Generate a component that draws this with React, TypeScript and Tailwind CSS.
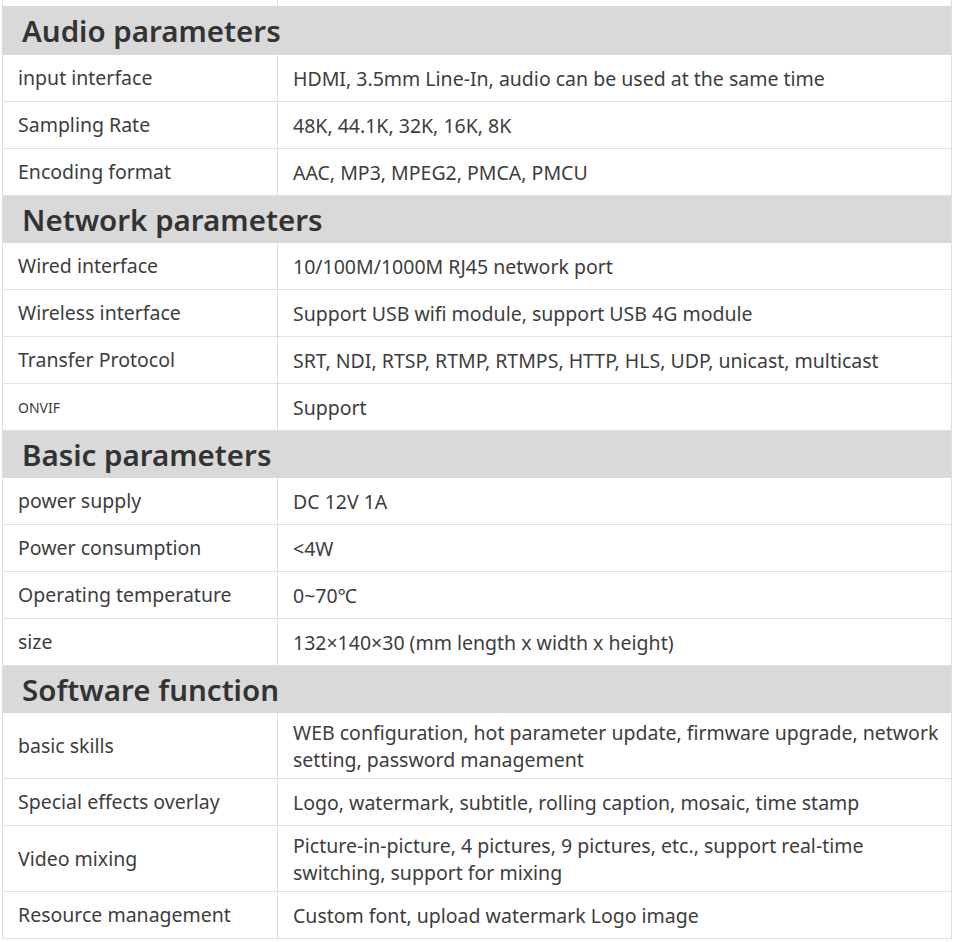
type Row = { label: string; value: string[]; small?: boolean; tall?: boolean };
type Section = { title: string; rows: Row[]; first?: boolean };

const sections: Section[] = [
  {
    title: "Audio parameters",
    first: true,
    rows: [
      { label: "input interface", value: ["HDMI, 3.5mm Line-In, audio can be used at the same time"] },
      { label: "Sampling Rate", value: ["48K, 44.1K, 32K, 16K, 8K"] },
      { label: "Encoding format", value: ["AAC, MP3, MPEG2, PMCA, PMCU"] },
    ],
  },
  {
    title: "Network parameters",
    rows: [
      { label: "Wired interface", value: ["10/100M/1000M RJ45 network port"] },
      { label: "Wireless interface", value: ["Support USB wifi module, support USB 4G module"] },
      { label: "Transfer Protocol", value: ["SRT, NDI, RTSP, RTMP, RTMPS, HTTP, HLS, UDP, unicast, multicast"] },
      { label: "ONVIF", value: ["Support"], small: true },
    ],
  },
  {
    title: "Basic parameters",
    rows: [
      { label: "power supply", value: ["DC 12V 1A"] },
      { label: "Power consumption", value: ["<4W"] },
      { label: "Operating temperature", value: ["0~70℃"] },
      { label: "size", value: ["132×140×30 (mm length x width x height)"] },
    ],
  },
  {
    title: "Software function",
    rows: [
      {
        label: "basic skills",
        value: ["WEB configuration, hot parameter update, firmware upgrade, network", "setting, password management"],
        tall: true,
      },
      { label: "Special effects overlay", value: ["Logo, watermark, subtitle, rolling caption, mosaic, time stamp"] },
      {
        label: "Video mixing",
        value: ["Picture-in-picture, 4 pictures, 9 pictures, etc., support real-time", "switching, support for mixing"],
        tall: true,
      },
      { label: "Resource management", value: ["Custom font, upload watermark Logo image"] },
    ],
  },
];

export default function App() {
  return (
    <div
      className="w-[955px] h-[942px] bg-white overflow-hidden text-[#3d3d3d]"
      style={{ fontFamily: '"Noto Sans", "Open Sans", sans-serif' }}
    >
      <div className="ml-[2px] w-[950px] border-x border-[#dedede]">
        {/* tail of the previous row */}
        <div className="flex h-[6px]">
          <div className="w-[275px] border-r border-[#dedede]" />
        </div>
        {sections.map((s) => (
          <div key={s.title}>
            <div
              className={`${s.first ? "h-[49px]" : "h-[47px]"} bg-[#d9d9d9] flex items-center pl-[19px] text-[29.5px] font-semibold text-[#333] leading-none`}
            >
              {s.title}
            </div>
            {s.rows.map((r) => (
              <div
                key={r.label}
                className={`flex border-b border-[#e2e2e2] ${r.tall ? "h-[66px]" : "h-[47px]"}`}
              >
                <div
                  className={`w-[275px] shrink-0 border-r border-[#dedede] flex items-center pl-[15px] ${
                    r.small ? "text-[14px]" : "text-[19.5px]"
                  }`}
                >
                  {r.label}
                </div>
                <div className="flex-1 flex flex-col justify-center pl-[15px] text-[19.5px] leading-[27px] whitespace-nowrap">
                  {r.value.map((line) => (
                    <span key={line}>{line}</span>
                  ))}
                </div>
              </div>
            ))}
          </div>
        ))}
      </div>
    </div>
  );
}
